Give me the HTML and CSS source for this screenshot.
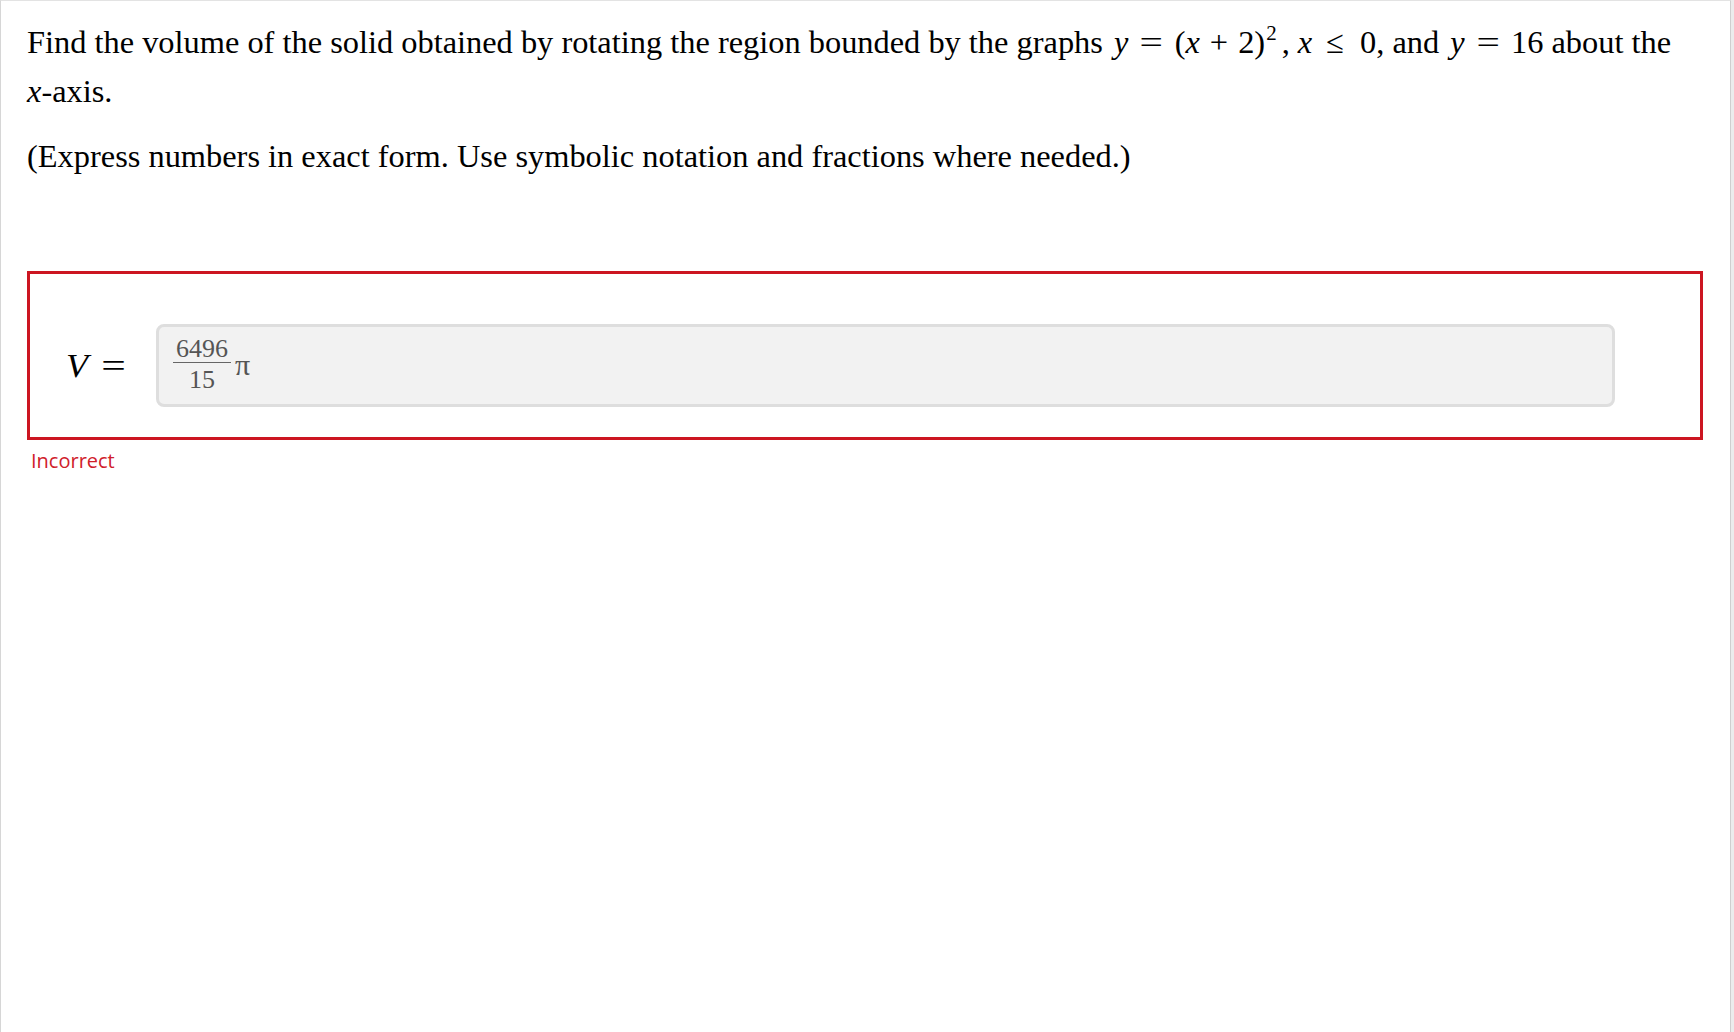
FILE: index.html
```html
<!DOCTYPE html>
<html>
<head>
<meta charset="utf-8">
<link rel="stylesheet" href="styles.css">
</head>
<body>
<div class="page">
  <p class="q">Find the volume of the solid obtained by rotating the region bounded by the graphs <span class="m"><i>y</i><span class="rel"><span class="g">=</span></span>(<i>x</i><span class="bin">+</span>2)<sup>2</sup>,&nbsp;<i>x</i><span class="rel le">≤</span>0,</span> and <span class="m"><i>y</i><span class="rel"><span class="g">=</span></span>16</span> about the <span class="nw"><i>x</i>-axis.</span></p>
  <p class="q">(Express numbers in exact form. Use symbolic notation and fractions where needed.)</p>
  <div class="answer">
    <div class="row">
      <span class="label"><i>V</i><span class="lrel"><span class="g">=</span></span></span>
      <div class="input">
        <span class="frac"><span class="num">6496</span><span class="den">15</span></span><span class="pi">π</span>
      </div>
    </div>
  </div>
  <div class="status">Incorrect</div>
</div>
</body>
</html>
```
FILE: styles.css
```css
html, body {
  margin: 0;
  padding: 0;
}
body {
  background: #ececec;
  width: 1734px;
  height: 1032px;
  overflow: hidden;
}
.page {
  box-sizing: border-box;
  width: 1731px;
  height: 1032px;
  background: #fff;
  border-top: 1px solid #e3e3e3;
  border-left: 1px solid #d6d6d6;
  border-right: 1px solid #cfcfcf;
  padding: 17px 0 0 26px;
  font-family: "Liberation Serif", "Times New Roman", serif;
  color: #000;
}
.q {
  margin: 0 0 16px 0;
  font-size: 32.4px;
  line-height: 49px;
  width: 1700px;
}
.q i, .label i {
  font-style: italic;
}
.m {
  margin-left: 3px;
}
.nw {
  white-space: nowrap;
}
.rel {
  display: inline-block;
  padding: 0 14px;
}
.rel.le {
  padding: 0 16px 0 14px;
}
.g {
  display: inline-block;
  transform: scaleX(1.28);
}
.bin {
  padding: 0 10px;
}
sup {
  font-size: 21px;
  line-height: 0;
  vertical-align: 13px;
  margin: 0 5px 0 1px;
}
.answer {
  margin-top: 90px;
  width: 1676px;
  box-sizing: border-box;
  border: 3px solid #cc1621;
  padding: 50px 0 30px 36px;
}
.row {
  display: flex;
  align-items: center;
}
.label {
  font-size: 34px;
  width: 90px;
  flex: none;
  display: flex;
  align-items: center;
}
.label i {
  display: inline-block;
  transform: scaleX(1.06);
  transform-origin: left center;
}
.lrel {
  padding-left: 17px;
}
.input {
  box-sizing: border-box;
  width: 1459px;
  height: 83px;
  border: 3px solid #dedede;
  border-radius: 8px;
  background: #f2f2f2;
  display: flex;
  align-items: center;
  padding-left: 14px;
  color: #555;
  font-size: 26px;
}
.frac {
  display: inline-flex;
  flex-direction: column;
  align-items: center;
  line-height: 26px;
  margin-bottom: 3px;
}
.num {
  border-bottom: 1px solid #666;
  padding: 0 3px 0;
}
.den {
  padding-top: 4px;
}
.pi {
  margin-left: 4px;
  margin-bottom: 1px;
  font-size: 30px;
}
.status {
  margin: 7px 0 0 4px;
  font-family: "Open Sans", "Noto Sans", sans-serif;
  font-size: 20px;
  color: #d0202a;
}
```
